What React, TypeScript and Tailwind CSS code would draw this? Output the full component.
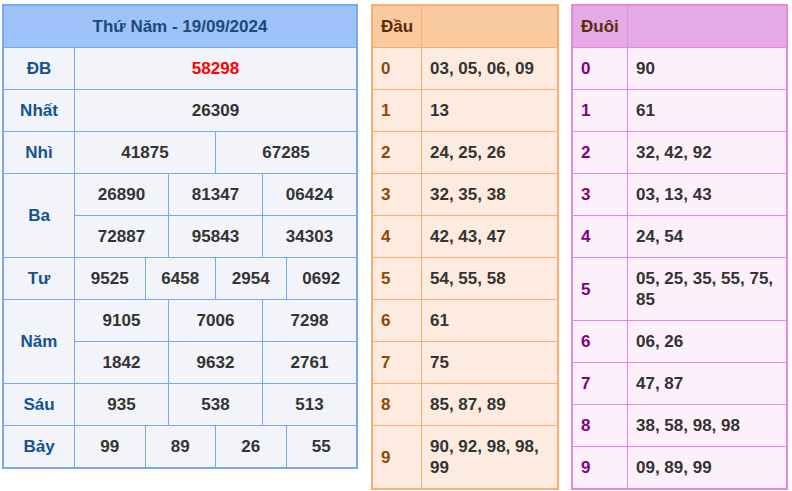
import React from "react";

type Prize = { label: string; rows: string[][]; red?: boolean };

const prizes: Prize[] = [
  { label: "ĐB", rows: [["58298"]], red: true },
  { label: "Nhất", rows: [["26309"]] },
  { label: "Nhì", rows: [["41875", "67285"]] },
  {
    label: "Ba",
    rows: [
      ["26890", "81347", "06424"],
      ["72887", "95843", "34303"],
    ],
  },
  { label: "Tư", rows: [["9525", "6458", "2954", "0692"]] },
  {
    label: "Năm",
    rows: [
      ["9105", "7006", "7298"],
      ["1842", "9632", "2761"],
    ],
  },
  { label: "Sáu", rows: [["935", "538", "513"]] },
  { label: "Bảy", rows: [["99", "89", "26", "55"]] },
];

const dau = [
  "03, 05, 06, 09",
  "13",
  "24, 25, 26",
  "32, 35, 38",
  "42, 43, 47",
  "54, 55, 58",
  "61",
  "75",
  "85, 87, 89",
  "90, 92, 98, 98, 99",
];

const duoi = [
  "90",
  "61",
  "32, 42, 92",
  "03, 13, 43",
  "24, 54",
  "05, 25, 35, 55, 75, 85",
  "06, 26",
  "47, 87",
  "38, 58, 98, 98",
  "09, 89, 99",
];

const colsClass: Record<number, string> = {
  1: "grid-cols-1",
  2: "grid-cols-2",
  3: "grid-cols-3",
  4: "grid-cols-4",
};

const rowSpan: Record<number, string> = {
  1: "row-span-1",
  2: "row-span-2",
};

function ResultTable() {
  return (
    <div className="w-[356px] shrink-0 border-2 border-[#7aa8f0] bg-[#7aa8f0] grid grid-cols-[70px_1fr] gap-px">
      <div className="col-span-2 h-[41px] bg-[#9fc3f9] flex items-center justify-center text-[#1b4a78]">
        Thứ Năm - 19/09/2024
      </div>
      {prizes.map((p) => (
        <React.Fragment key={p.label}>
          <div
            className={`${rowSpan[p.rows.length]} bg-[#f3f4f9] flex items-center justify-center text-[#135391]`}
          >
            {p.label}
          </div>
          {p.rows.map((r, i) => (
            <div key={i} className={`grid ${colsClass[r.length]} gap-px`}>
              {r.map((n, j) => (
                <div
                  key={j}
                  className={`h-[41px] bg-[#f3f4f9] flex items-center justify-center ${
                    p.red ? "text-[#ff0000]" : "text-[#333333]"
                  }`}
                >
                  {n}
                </div>
              ))}
            </div>
          ))}
        </React.Fragment>
      ))}
    </div>
  );
}

function LotoTable({
  title,
  items,
  width,
  cols,
  border,
  headBg,
  rowBg,
  keyColor,
}: {
  title: string;
  items: string[];
  width: string;
  cols: string;
  border: string;
  headBg: string;
  rowBg: string;
  keyColor: string;
}) {
  return (
    <div className={`${width} shrink-0 border-2 ${border} grid ${cols} gap-px`}>
      <div className={`h-[41px] ${headBg} flex items-center px-[8px] text-[#5a2a0b]`}>
        {title}
      </div>
      <div className={`h-[41px] ${headBg}`} />
      {items.map((v, i) => (
        <React.Fragment key={i}>
          <div className={`${rowBg} flex items-center px-[8px] ${keyColor}`}>{i}</div>
          <div className={`${rowBg} min-h-[41px] px-[8px] py-[10px] leading-[21px] text-[#333333] flex items-center`}>
            <span>{v}</span>
          </div>
        </React.Fragment>
      ))}
    </div>
  );
}

export default function App() {
  return (
    <div className="w-[792px] h-[491px] bg-white pt-[4px] pl-[2px] flex items-start font-['Liberation_Sans',Arial,sans-serif] font-bold text-[17px] leading-[21px]">
      <ResultTable />
      <div className="ml-[13px]">
        <LotoTable
          title="Đầu"
          items={dau}
          width="w-[188px]"
          cols="grid-cols-[48px_1fr]"
          border="border-[#f7ae72] bg-[#f7ae72]"
          headBg="bg-[#f9ca9d]"
          rowBg="bg-[#fdebdf]"
          keyColor="text-[#8b4a0c]"
        />
      </div>
      <div className="ml-[12px]">
        <LotoTable
          title="Đuôi"
          items={duoi}
          width="w-[217px]"
          cols="grid-cols-[54px_1fr]"
          border="border-[#e688dd] bg-[#e688dd]"
          headBg="bg-[#e4aae6]"
          rowBg="bg-[#fcf0fa]"
          keyColor="text-[#800080]"
        />
      </div>
    </div>
  );
}
